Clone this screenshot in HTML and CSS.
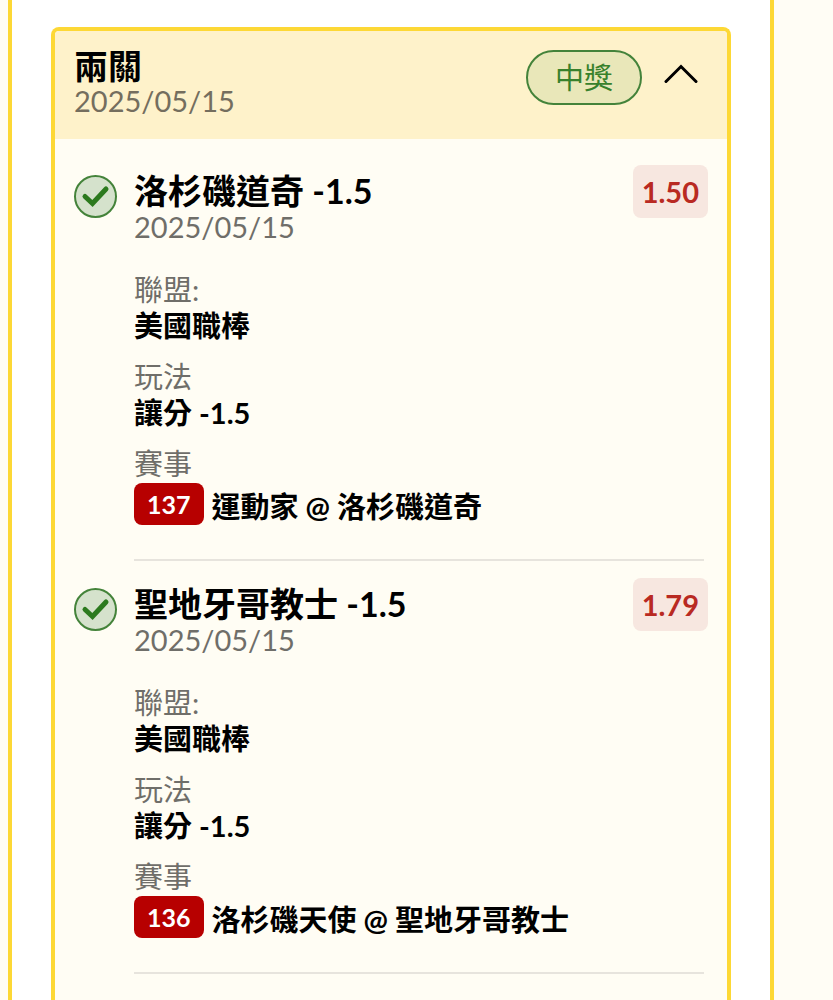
FILE: index.html
```html
<!DOCTYPE html>
<html lang="zh-Hant">
<head>
  <meta charset="UTF-8" />
  <meta name="viewport" content="width=device-width, initial-scale=1.0"/>
  <title>兩關</title>
  <link rel="stylesheet" href="styles.css">
</head>
<body>

<main class="panel">
  <section class="card">
    <header class="card-header">
      <div class="card-title">
        <h2>兩關</h2>
        <p class="date">2025/05/15</p>
      </div>
      <span class="status">中獎</span>
      <button class="toggle" type="button" aria-label="收合">
        <svg width="34" height="20" viewBox="0 0 34 20" fill="none" stroke="#000" stroke-width="3" stroke-linecap="round"><path d="M2 17.5L17 2.5L32 17.5"/></svg>
      </button>
    </header>

    <div class="card-body">
      <article class="bet">
        <svg class="check" viewBox="0 0 43 43" fill="none"><circle cx="21.5" cy="21.5" r="20.5" fill="#d5e2cc" stroke="#44833a" stroke-width="2"/><path d="M11 21.5L18.5 28.5L32 14" stroke="#2c7a1e" stroke-width="5" stroke-linecap="round"/></svg>
        <div class="bet-main">
          <h3>洛杉磯道奇 -1.5</h3>
          <p class="date">2025/05/15</p>
          <dl class="fields">
            <div><dt>聯盟:</dt><dd>美國職棒</dd></div>
            <div><dt>玩法</dt><dd>讓分 -1.5</dd></div>
            <div><dt>賽事</dt><dd class="match"><span class="code">137</span>運動家 @ 洛杉磯道奇</dd></div>
          </dl>
        </div>
        <span class="odds">1.50</span>
      </article>

      <article class="bet">
        <svg class="check" viewBox="0 0 43 43" fill="none"><circle cx="21.5" cy="21.5" r="20.5" fill="#d5e2cc" stroke="#44833a" stroke-width="2"/><path d="M11 21.5L18.5 28.5L32 14" stroke="#2c7a1e" stroke-width="5" stroke-linecap="round"/></svg>
        <div class="bet-main">
          <h3>聖地牙哥教士 -1.5</h3>
          <p class="date">2025/05/15</p>
          <dl class="fields">
            <div><dt>聯盟:</dt><dd>美國職棒</dd></div>
            <div><dt>玩法</dt><dd>讓分 -1.5</dd></div>
            <div><dt>賽事</dt><dd class="match"><span class="code">136</span>洛杉磯天使 @ 聖地牙哥教士</dd></div>
          </dl>
        </div>
        <span class="odds">1.79</span>
      </article>
    </div>
  </section>
</main>

</body>
</html>
```
FILE: styles.css
```css
* {
  box-sizing: border-box;
}
body {
  margin: 0;
  padding: 0 59px 0 8px;
  font-family: Lato, "Noto Sans CJK TC", sans-serif;
  font-size: 29px;
  line-height: 36px;
  background-color: #fffdf5;
  color: #000;
}
h2, h3, p, dl, dd {
  margin: 0;
}
h2, h3 {
  font-size: 34px;
  line-height: 36px;
  font-weight: 700;
}
.panel {
  display: flex;
  flex-direction: column;
  min-height: 100vh;
  padding: 27px 39px 0;
  background-color: #fff;
  border: solid #fdd835;
  border-width: 0 4px;
}
.card {
  flex: 1;
  background-color: #fffdf4;
  border: 4px solid #fdd835;
  border-bottom: 0;
  border-radius: 8px 8px 0 0;
}
.card-header {
  display: flex;
  align-items: flex-start;
  height: 108px;
  padding: 17px 29px 0 19px;
  background-color: #fef2ca;
  border-radius: 4px 4px 0 0;
}
.card-title {
  flex: 1;
}
.date, dt {
  color: #6f6e69;
}
.card-header .date {
  line-height: 34px;
  color: #746e5e;
}
.status {
  margin-top: 2px;
  padding: 8px 27px;
  line-height: 35px;
  color: #38812c;
  background-color: #e9e7b9;
  border: 2px solid #44833a;
  border-radius: 28px;
}
.toggle {
  margin: 16px 0 0 22px;
  padding: 0;
  border: 0;
  background: none;
  line-height: 0;
}
.card-body {
  padding: 9px 19px 0;
}
.bet {
  display: grid;
  grid-template-columns: 43px 1fr auto;
  column-gap: 17px;
  padding-top: 17px;
}
.bet::after {
  content: "";
  grid-column: 2 / 4;
  height: 2px;
  margin: 34px 4px 0 0;
  background-color: #e7e4dd;
}
.check {
  width: 43px;
  height: 43px;
  margin-top: 10px;
}
.bet-main {
  padding-top: 8px;
}
.fields {
  display: grid;
  gap: 15px;
  margin-top: 27px;
}
dd {
  font-weight: 700;
}
.match {
  display: flex;
  align-items: flex-end;
  gap: 8px;
  padding-top: 1px;
}
.code {
  padding: 3px 13px;
  font-size: 25px;
  color: #fff;
  background-color: #b70000;
  border-radius: 8px;
}
.odds {
  align-self: start;
  padding: 9px 9px 8px;
  font-weight: 700;
  color: #b92a22;
  background-color: #f7e7e0;
  border-radius: 8px;
}
```
